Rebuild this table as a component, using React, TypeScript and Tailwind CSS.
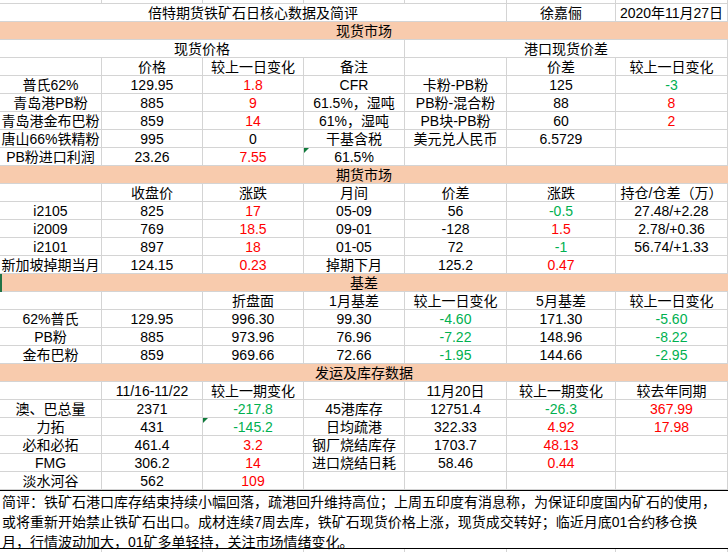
import React from "react";

type Cell =
  | string
  | {
      t: string;
      c?: "r" | "g";
      s?: number;
      tri?: boolean;
    };

const SPAN: Record<number, string> = {
  1: "col-span-1",
  2: "col-span-2",
  3: "col-span-3",
  4: "col-span-4",
  5: "col-span-5",
  6: "col-span-6",
  7: "col-span-7",
};

const GRID = "grid grid-cols-[102px_101px_101px_101px_102px_109px_112px]";

function Row({ cells }: { cells: Cell[] }) {
  return (
    <div className={GRID}>
      {cells.map((cell, i) => {
        const c = typeof cell === "string" ? { t: cell } : cell;
        const color =
          c.c === "r" ? "text-[#ff0000]" : c.c === "g" ? "text-[#00b050]" : "text-black";
        return (
          <div
            key={i}
            className={`${SPAN[c.s ?? 1]} ${color} relative h-[18px] border-r border-b border-[#d4d4d4] flex items-center justify-center whitespace-nowrap leading-[16px]`}
          >
            {c.tri && (
              <svg className="absolute left-0 top-0" width="5" height="5" viewBox="0 0 5 5">
                <polygon points="0,0 5,0 0,5" fill="#0e7a3a" />
              </svg>
            )}
            {c.t}
          </div>
        );
      })}
    </div>
  );
}

function Band({ title, mark }: { title: string; mark?: boolean }) {
  return (
    <div className="relative h-[18px] bg-[#f8cbad] border-b border-[#d4d4d4] flex items-center justify-center leading-[16px]">
      {mark && <div className="absolute left-0 top-0 h-[18px] w-[2px] bg-[#217346]" />}
      {title}
    </div>
  );
}

const r = (t: string): Cell => ({ t, c: "r" });
const g = (t: string): Cell => ({ t, c: "g" });

export default function App() {
  return (
    <div className="w-[728px] h-[552px] overflow-hidden bg-white text-[14px] font-['Liberation_Sans','Noto_Sans_CJK_SC',sans-serif]">
      {/* partial row above the title */}
      <div className={GRID}>
        {[0, 1, 2, 3, 4, 5, 6].map((i) => (
          <div key={i} className="h-[4px] border-r border-b border-[#d4d4d4]" />
        ))}
      </div>

      <Row cells={[{ t: "倍特期货铁矿石日核心数据及简评", s: 5 }, "徐嘉俪", "2020年11月27日"]} />

      {/* 现货市场 */}
      <Band title="现货市场" />
      <Row cells={[{ t: "现货价格", s: 4 }, { t: "港口现货价差", s: 3 }]} />
      <Row cells={["", "价格", "较上一日变化", "备注", "", "价差", "较上一日变化"]} />
      <Row cells={["普氏62%", "129.95", r("1.8"), "CFR", "卡粉-PB粉", "125", g("-3")]} />
      <Row cells={["青岛港PB粉", "885", r("9"), "61.5%，湿吨", "PB粉-混合粉", "88", r("8")]} />
      <Row cells={["青岛港金布巴粉", "859", r("14"), "61%，湿吨", "PB块-PB粉", "60", r("2")]} />
      <Row cells={["唐山66%铁精粉", "995", "0", "干基含税", "美元兑人民币", "6.5729", ""]} />
      <Row cells={["PB粉进口利润", "23.26", r("7.55"), { t: "61.5%", tri: true }, "", "", ""]} />

      {/* 期货市场 */}
      <Band title="期货市场" />
      <Row cells={["", "收盘价", "涨跌", "月间", "价差", "涨跌", "持仓/仓差（万）"]} />
      <Row cells={["i2105", "825", r("17"), "05-09", "56", g("-0.5"), "27.48/+2.28"]} />
      <Row cells={["i2009", "769", r("18.5"), "09-01", "-128", r("1.5"), "2.78/+0.36"]} />
      <Row cells={["i2101", "897", r("18"), "01-05", "72", g("-1"), "56.74/+1.33"]} />
      <Row cells={["新加坡掉期当月", "124.15", r("0.23"), "掉期下月", "125.2", r("0.47"), ""]} />

      {/* 基差 */}
      <Band title="基差" mark />
      <Row cells={["", "", "折盘面", "1月基差", "较上一日变化", "5月基差", "较上一日变化"]} />
      <Row cells={["62%普氏", "129.95", "996.30", "99.30", g("-4.60"), "171.30", g("-5.60")]} />
      <Row cells={["PB粉", "885", "973.96", "76.96", g("-7.22"), "148.96", g("-8.22")]} />
      <Row cells={["金布巴粉", "859", "969.66", "72.66", g("-1.95"), "144.66", g("-2.95")]} />

      {/* 发运及库存数据 */}
      <Band title="发运及库存数据" />
      <Row cells={["", "11/16-11/22", "较上一期变化", "", "11月20日", "较上一期变化", "较去年同期"]} />
      <Row cells={["澳、巴总量", "2371", g("-217.8"), "45港库存", "12751.4", g("-26.3"), r("367.99")]} />
      <Row cells={["力拓", "431", { t: "-145.2", c: "g", tri: true }, "日均疏港", "322.33", r("4.92"), r("17.98")]} />
      <Row cells={["必和必拓", "461.4", r("3.2"), "钢厂烧结库存", "1703.7", r("48.13"), ""]} />
      <Row cells={["FMG", "306.2", r("14"), "进口烧结日耗", "58.46", r("0.44"), ""]} />
      <Row cells={["淡水河谷", "562", r("109"), "", "", "", ""]} />

      {/* 简评 */}
      <div className="h-[59px] border-t border-b border-black px-[2px] pt-[1px] leading-[20px] whitespace-nowrap text-black">
        <div>简评：铁矿石港口库存结束持续小幅回落，疏港回升维持高位；上周五印度有消息称，为保证印度国内矿石的使用，</div>
        <div>或将重新开始禁止铁矿石出口。成材连续7周去库，铁矿石现货价格上涨，现货成交转好；临近月底01合约移仓换</div>
        <div className="h-[17px]">月，行情波动加大，01矿多单轻持，关注市场情绪变化。</div>
      </div>

      <div className={GRID}>
        {[0, 1, 2, 3, 4, 5, 6].map((i) => (
          <div key={i} className="h-[18px] border-r border-[#d4d4d4]" />
        ))}
      </div>
    </div>
  );
}
